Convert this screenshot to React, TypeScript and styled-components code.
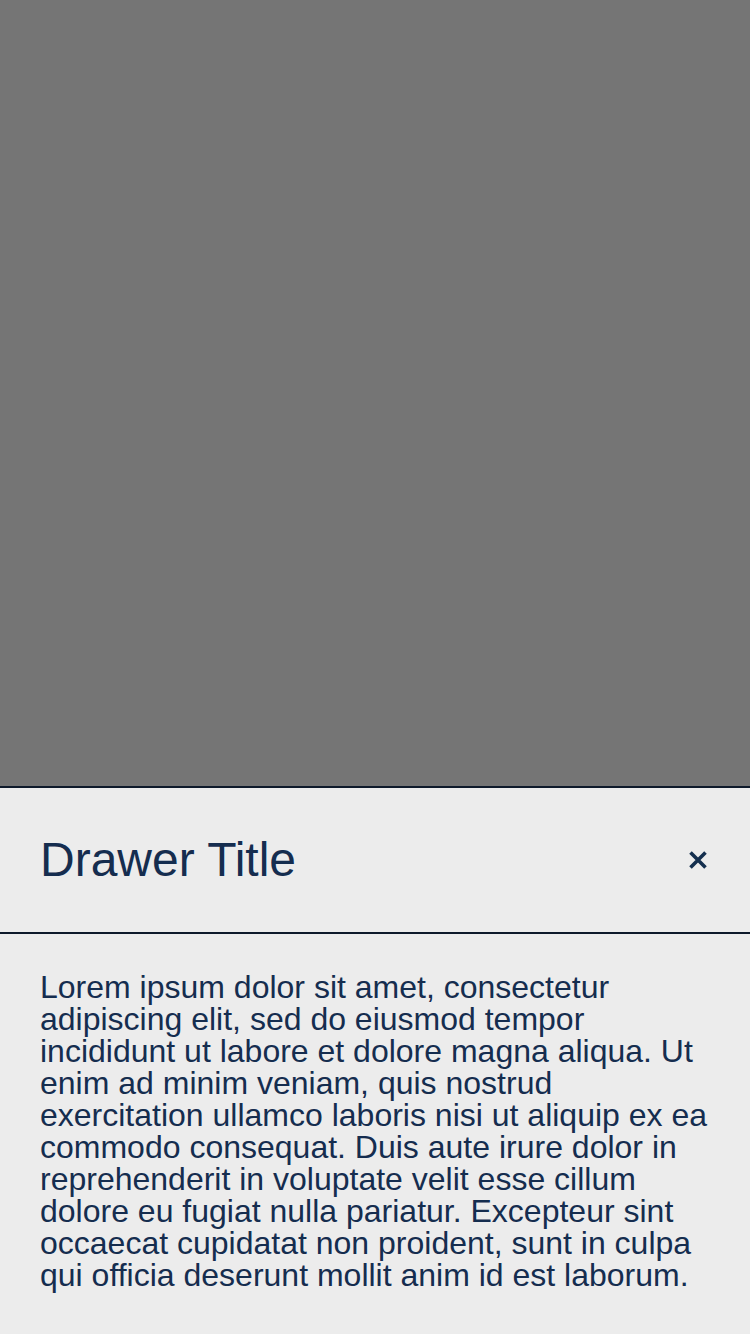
import React from "react";
import styled, { createGlobalStyle } from "styled-components";

const Global = createGlobalStyle`
  html, body { margin: 0; padding: 0; }
  body {
    width: 750px;
    height: 1334px;
    overflow: hidden;
    font-family: "Liberation Sans", Arial, sans-serif;
  }
  #root { height: 1334px; }
`;

const Screen = styled.div`
  display: flex;
  flex-direction: column;
  height: 1334px;
  background: #757575;
`;

const Overlay = styled.div`
  flex: 1;
`;

const Drawer = styled.section`
  height: 548px;
  box-sizing: border-box;
  background: #ececec;
  border-top: 2px solid #0e1a2b;
  display: flex;
  flex-direction: column;
  color: #152d4f;
`;

const Header = styled.header`
  display: flex;
  align-items: center;
  justify-content: space-between;
  padding: 40px 40px;
  border-bottom: 2px solid #0e1a2b;
`;

const Title = styled.h2`
  margin: 0;
  font-weight: 400;
  font-size: 48px;
  line-height: 64px;
`;

const CloseButton = styled.button`
  border: 0;
  background: none;
  padding: 0;
  width: 24px;
  height: 24px;
  display: flex;
  align-items: center;
  justify-content: center;
  color: #15304f;
  cursor: pointer;
`;

const Body = styled.div`
  padding: 37px 40px 40px;
  font-size: 32px;
  line-height: 32px;
`;

export default function App() {
  return (
    <>
      <Global />
      <Screen>
        <Overlay />
        <Drawer>
          <Header>
            <Title>Drawer Title</Title>
            <CloseButton aria-label="Close">
              <svg width="20" height="20" viewBox="0 0 20 20">
                <path
                  d="M2.5 2.5 L17.5 17.5 M17.5 2.5 L2.5 17.5"
                  stroke="currentColor"
                  strokeWidth="3.6"
                  strokeLinecap="butt"
                  fill="none"
                />
              </svg>
            </CloseButton>
          </Header>
          <Body>
            Lorem ipsum dolor sit amet, consectetur adipiscing elit, sed do eiusmod tempor incididunt ut labore et dolore magna aliqua. Ut enim ad minim veniam, quis nostrud exercitation ullamco laboris nisi ut aliquip ex ea commodo consequat. Duis aute irure dolor in reprehenderit in voluptate velit esse cillum dolore eu fugiat nulla pariatur. Excepteur sint occaecat cupidatat non proident, sunt in culpa qui officia deserunt mollit anim id est laborum.
          </Body>
        </Drawer>
      </Screen>
    </>
  );
}
